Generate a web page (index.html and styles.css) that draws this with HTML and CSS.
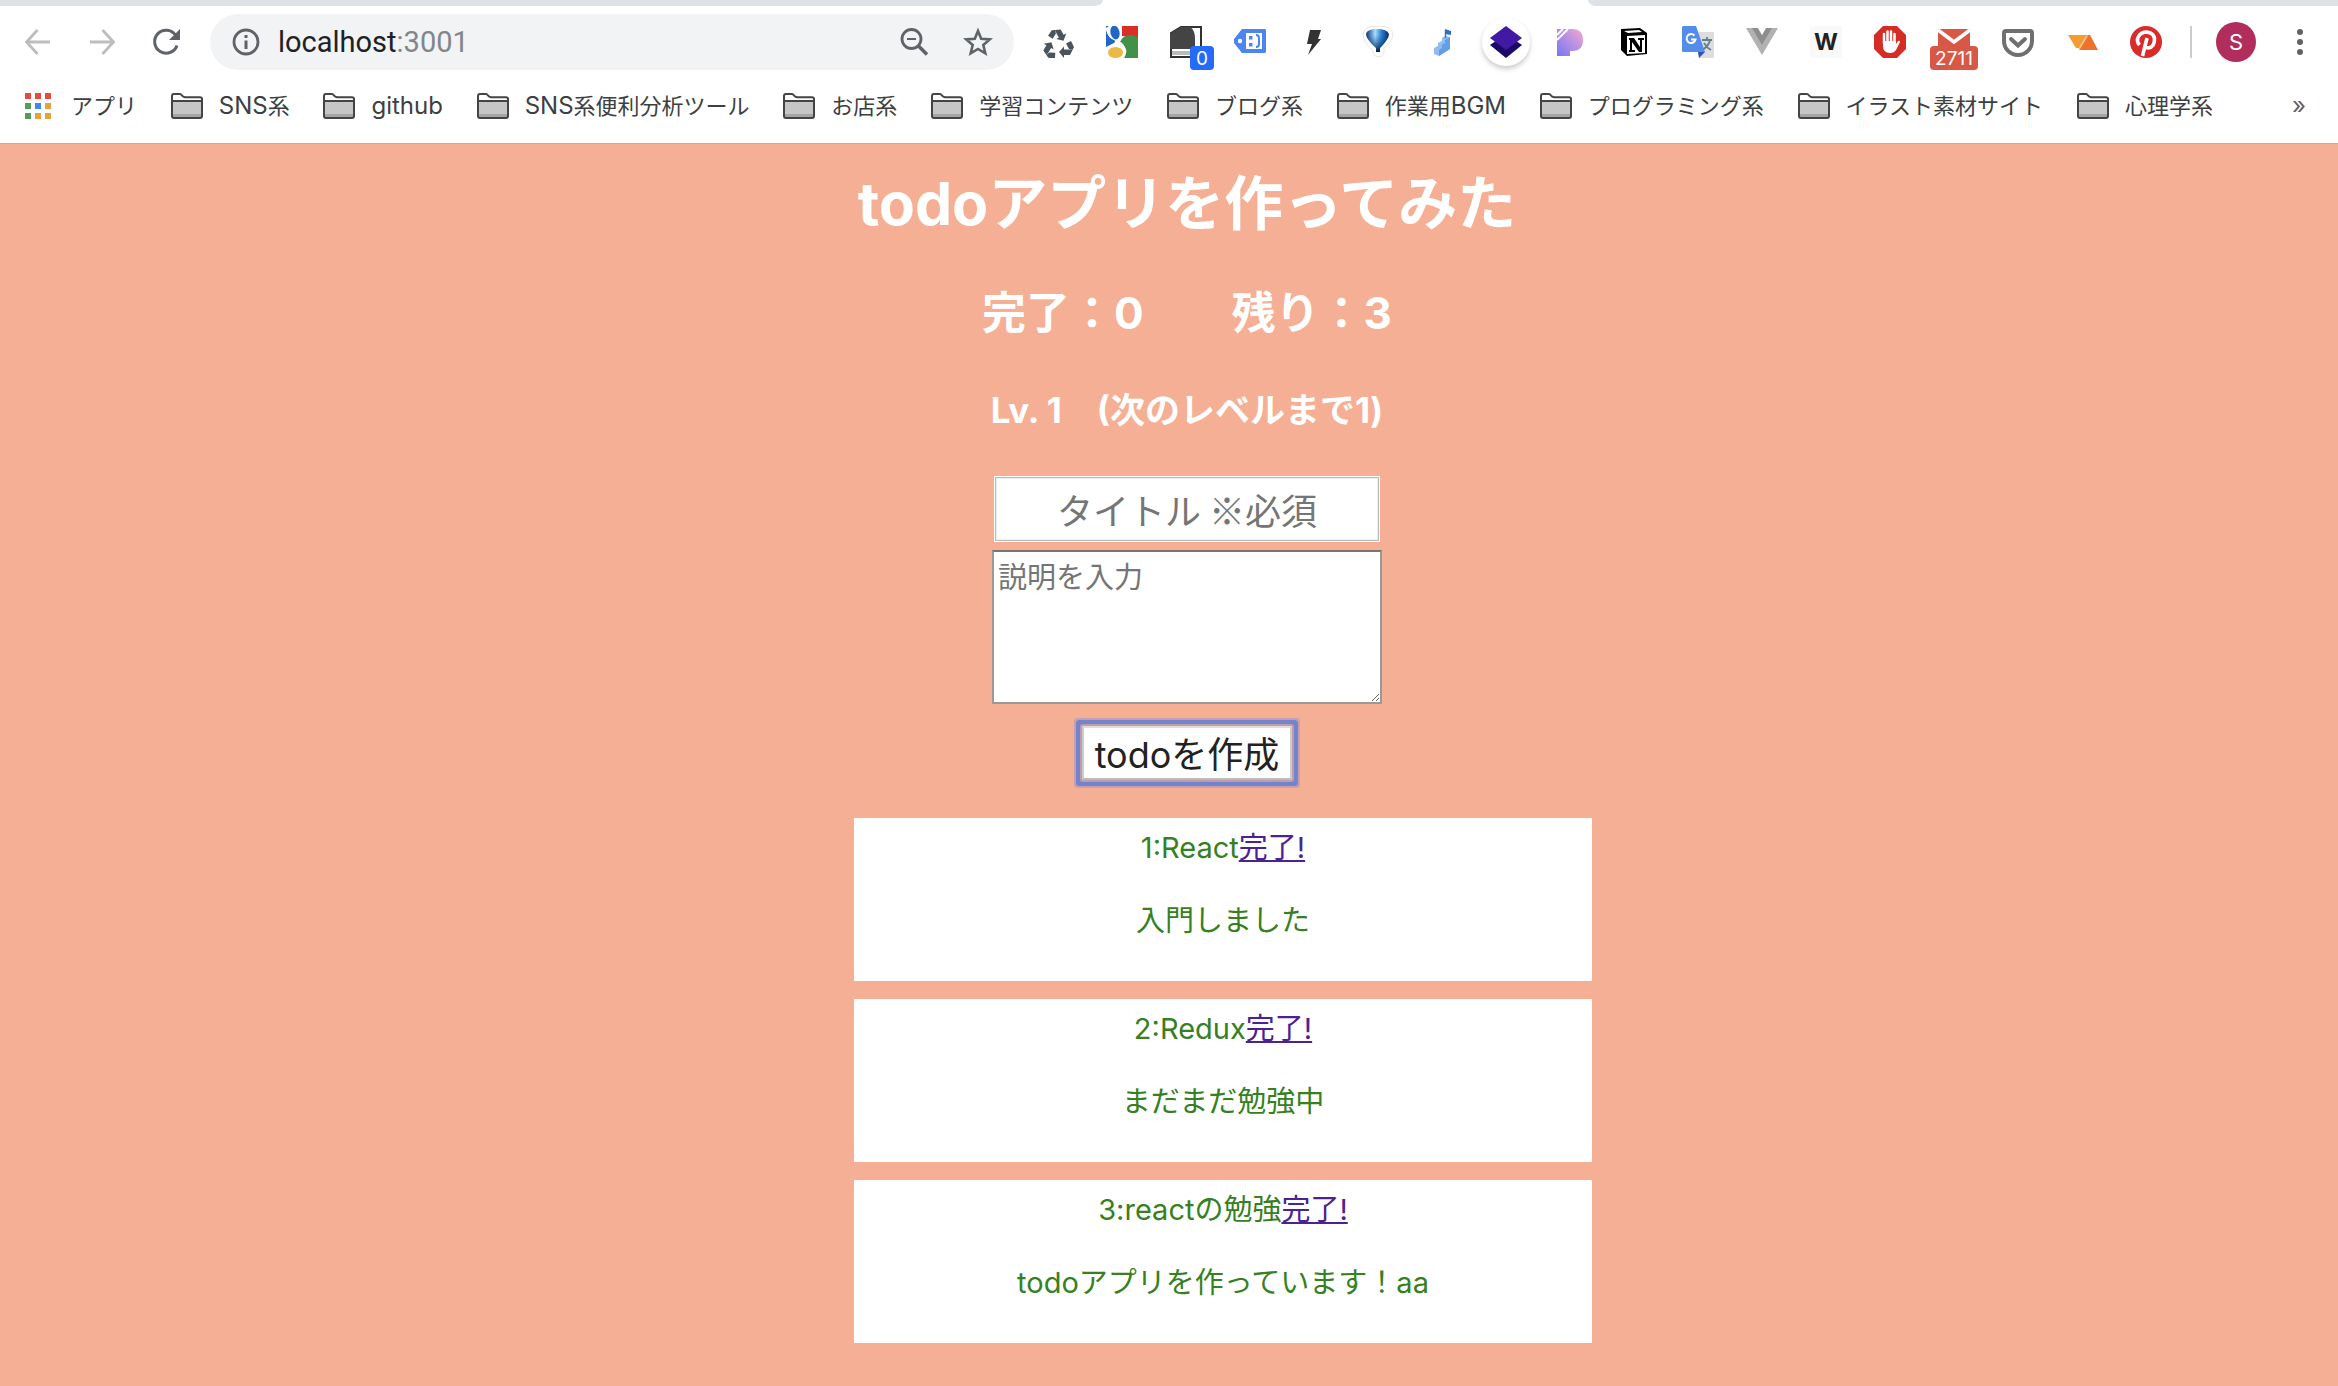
FILE: index.html
```html
<!DOCTYPE html>
<html lang="ja">
<head>
<meta charset="utf-8">
<title>todoアプリ</title>
<link rel="stylesheet" href="styles.css">
</head>
<body>
<svg class="defs" aria-hidden="true">
  <symbol id="folder" viewBox="0 0 32 26">
    <path d="M1.5 3Q1.5 1.5 3 1.5H10L13.500 4.500H30.500V8H1.500Z" fill="#fff"/>
    <path d="M2 8H30V24H2Z" fill="#c6c6c6"/><path d="M2 21H30V24H2Z" fill="#a5a5a5"/>
    <path d="M1 3Q1 1 3 1H9Q10 1 11 2.500T14 4.200H29Q31 4.200 31 6V23Q31 25 29 25H3Q1 25 1 23ZM1 8H31" fill="none" stroke="#444" stroke-width="2"/>
  </symbol>
</svg>
<header class="browser">
  <div class="tabs"><div class="tabs-left"></div><div class="tab-active"></div><div class="tabs-right"></div></div>
  <div class="toolbar">
    <nav class="history">
      <button class="icon" aria-label="戻る"><svg viewBox="0 0 32 32"><path d="M28 16H5M15.500 4L4.500 16L15.500 28" fill="none" stroke="#bcbdbf" stroke-width="2.800"/></svg></button>
      <button class="icon" aria-label="進む"><svg viewBox="0 0 32 32"><path d="M4 16H27M16.500 4L27.500 16L16.500 28" fill="none" stroke="#bcbdbf" stroke-width="2.800"/></svg></button>
      <button class="icon" aria-label="再読み込み"><svg viewBox="0 0 32 32"><path d="M25.500 9A11.500 11.500 0 1 0 27 19.500" fill="none" stroke="#5f6368" stroke-width="3"/><path d="M30 3V14H19Z" fill="#5f6368"/></svg></button>
    </nav>
    <div class="address">
      <svg class="info" viewBox="0 0 28 28"><circle cx="14" cy="14" r="12" fill="none" stroke="#5f6368" stroke-width="2.800"/><path d="M14 7V10M14 12.500V21" stroke="#5f6368" stroke-width="3"/></svg>
      <span class="url">localhost<span class="port">:3001</span></span>
      <button class="icon" aria-label="ズーム"><svg viewBox="0 0 32 32"><circle cx="13.500" cy="13" r="9.500" fill="none" stroke="#5f6368" stroke-width="2.800"/><path d="M20 19.500L29 28.500" stroke="#5f6368" stroke-width="3.500"/><path d="M9 13H18" stroke="#5f6368" stroke-width="2"/></svg></button>
      <button class="icon" aria-label="ブックマーク"><svg viewBox="0 0 32 32"><path d="M16 5L19.200 12.700L27.800 13.400L21.300 19L23.300 27.300L16 22.900L8.700 27.300L10.700 19L4.200 13.400L12.800 12.700Z" fill="none" stroke="#5f6368" stroke-width="2.600"/></svg></button>
    </div>
    <div class="extensions">
      <button class="icon" aria-label="Recycle"><svg viewBox="0 0 32 32"><defs><path id="arm" d="M17 26L22 20.500V23.500H26.500L30.500 24L28 29H22V32ZM24 17.500L29 15L32 21L30.500 24L27 23Z"/></defs><g fill="#4b545d"><use href="#arm"/><use href="#arm" transform="rotate(120 16 19)"/><use href="#arm" transform="rotate(240 16 19)"/></g></svg></button>
      <button class="icon" aria-label="Google"><svg viewBox="0 0 32 32"><path d="M0 0H32V32H0Z" fill="#fff"/><path d="M16 0H32V12L16 10Z" fill="#d93025"/><path d="M32 10V32H18Q22 26 19 21T14 16Q16 10 24 9Q29 9 32 12Z" fill="#429149"/><path d="M0 4Q2 12 8 14Q11 16 6 18L0 21Z" fill="#2364c7"/><ellipse cx="9" cy="6.500" rx="4.500" ry="7" fill="#2364c7" transform="rotate(-12 9 6.500)"/><ellipse cx="9.500" cy="26.500" rx="7.500" ry="5.500" fill="#eaba45"/><path d="M0 0H3L0 2Z" fill="#2364c7"/></svg></button>
      <button class="icon" aria-label="Kindle"><svg viewBox="0 0 32 32"><path d="M1 7L11 1H31V31H1Z" fill="#fff" stroke="#333" stroke-width="2"/><path d="M0 8L11 1H20Q25 4 25 12V23H0Z" fill="#444"/><path d="M2 25H24V29H2Z" fill="#bbb"/></svg><span class="badge badge-blue">0</span></button>
      <button class="icon" aria-label="Tag"><svg viewBox="0 0 32 32"><path d="M8 3H31Q32 3 32 5V25Q32 27 31 27H8L0 17V13Z" fill="#4a85f0"/><path d="M12 7H28V23H12Z" fill="#fff"/><circle cx="6" cy="15" r="2.200" fill="#fff"/><path d="M15 10H18.500V13.500H15ZM15 17H18.500V20.500H15Z" fill="#4a85f0"/><path d="M22 9Q25 9 25 12V18Q25 21 22 21" fill="none" stroke="#4a85f0" stroke-width="2"/></svg></button>
      <button class="icon" aria-label="Bolt"><svg viewBox="0 0 32 32"><path d="M12 4H23L20 13H23L10 29L14 18H9Z" fill="#333"/></svg></button>
      <button class="icon" aria-label="Balloon"><svg viewBox="0 0 32 32"><defs><linearGradient id="bl"><stop offset="0" stop-color="#0d2c78"/><stop offset=".4" stop-color="#a9e0fb"/><stop offset=".65" stop-color="#2f87d5"/><stop offset="1" stop-color="#0b256b"/></linearGradient><linearGradient id="bd" x2="0" y2="1"><stop offset=".25" stop-color="#0b52ad" stop-opacity="0"/><stop offset="1" stop-color="#0a1745"/></linearGradient></defs><path d="M15 0Q31 0 31 9Q30 16 22 22V28Q20 31 15 31Q11 30 11 25Q1 15 1 9Q1 0 15 0Z" fill="#fff" stroke="#e5e5e5"/><path d="M4 8Q5 3 15 3T27 8Q27 13 18 22V26H14V22Q4 13 4 8Z" fill="url(#bl)"/><path d="M4 8Q5 3 15 3T27 8Q27 13 18 22V26H14V22Q4 13 4 8Z" fill="url(#bd)"/></svg></button>
      <button class="icon" aria-label="Steps"><svg viewBox="0 0 32 32"><path d="M8 22L12 20V17L16 15V12L19 10L24 11V23L13 30L8 28Z" fill="#8fbdf2"/><path d="M13 24L16 22V19L19 17V14L24 11V23L13 30Z" fill="#639fe6"/><path d="M19.500 12V4" stroke="#3e77b9" stroke-width="1.500"/><path d="M19 3L25 5V9L19 8Z" fill="#2f6fc6"/></svg></button>
      <button class="icon icon-round" aria-label="Layers"><svg viewBox="0 0 32 32"><path d="M0 19L16 8L32 19L16 32Z" fill="#1b0767"/><path d="M0 12L16 0L32 12L16 24Z" fill="#4119a4"/></svg></button>
      <button class="icon" aria-label="Pandora"><svg viewBox="0 0 32 32"><defs><linearGradient id="pg" x1="1" y1="0" x2="0" y2="1"><stop offset="0" stop-color="#f5a8cf"/><stop offset="1" stop-color="#7575f8"/></linearGradient></defs><path d="M3 3H18Q29 3 29 14T18 25H16V30H3Z" fill="url(#pg)"/><path d="M3 9L9 3M3 14L14 3" stroke="#fff" stroke-width="1.800"/></svg></button>
      <button class="icon" aria-label="Notion"><svg viewBox="0 0 32 32"><path d="M3 3L22 2L29 7V28L9 30L3 24Z"/><path d="M6 5L21 4L24 6L10 7ZM9 10L27 9V27L9 28Z" fill="#fff"/><path d="M11 12H16L22 21V14H20V12H26V14H24V26H21L14 16V24H17V26H11V24H12V14H11Z"/></svg></button>
      <button class="icon" aria-label="翻訳"><svg viewBox="0 0 32 32"><path d="M12 6H32V32H17Z" fill="#ddd"/><path d="M20 14H30M25 11V14M28 14Q27 20 20 24M22 17Q25 22 29 24" stroke="#61808a" stroke-width="1.800" fill="none"/><path d="M16 26H23L17 32Z" fill="#3152b5"/><path d="M1 0H14L23 26H1Q0 26 0 25V1Z" fill="#548cec"/><path d="M12.500 9.500A4.500 4.500 0 1 0 13.500 13.500H9" fill="none" stroke="#fff" stroke-width="2"/></svg></button>
      <button class="icon" aria-label="Vue"><svg viewBox="0 0 32 32"><path d="M0 2H32L16 29Z" fill="#b2b2b2"/><path d="M6 2H12L16 9L20 2H26L16 19Z" fill="#8e8e8e"/><path d="M12 2H20L16 9Z" fill="#fff"/></svg></button>
      <button class="icon icon-w" aria-label="W">W</button>
      <button class="icon" aria-label="AdBlock"><svg viewBox="0 0 32 32"><path d="M9 0H23L32 9V23L23 32H9L0 23V9Z" fill="#d52d23"/><path d="M10 17V8M13.500 16V5.500M17 16V5.500M20.500 17V8" stroke="#fff" stroke-width="2.500" stroke-linecap="round"/><path d="M9 15H22V18L24 15Q26 14 26 16L22 24Q20 27 16 27Q9 27 9 20Z" fill="#fff"/></svg></button>
      <button class="icon" aria-label="Gmail"><svg viewBox="0 0 32 32"><path d="M0 3H32V25H0Z" fill="#d85847"/><path d="M0 4L16 16L32 4" fill="none" stroke="#fff" stroke-width="3.500"/></svg><span class="badge badge-red">2711</span></button>
      <button class="icon" aria-label="Pocket"><svg viewBox="0 0 32 32"><path d="M4 5H28Q30 5 30 7V15A14 14 0 0 1 2 15V7Q2 5 4 5Z" fill="none" stroke="#6f6f6f" stroke-width="4"/><path d="M9 13L16 19.500L23 13" fill="none" stroke="#6f6f6f" stroke-width="4" stroke-linecap="round"/></svg></button>
      <button class="icon" aria-label="Orange"><svg viewBox="0 0 32 32"><path d="M2 9H22L14 22H10Z" fill="#f59b34"/><path d="M22 9H24L32 24H13Z" fill="#ee712c"/><path d="M21 10L13 23" stroke="#fbc491" stroke-width="1.500"/></svg></button>
      <button class="icon" aria-label="Pinterest"><svg viewBox="0 0 32 32"><circle cx="16" cy="16" r="16" fill="#da2b2b"/><path d="M9.500 19Q6 15 8.500 10.500Q11 6 17 6Q24 7 24.500 13Q24.500 21 18.500 22Q16 22 15 20M17 12L12.500 30" fill="none" stroke="#fff" stroke-width="3.600"/></svg></button>
    </div>
    <span class="divider"></span>
    <button class="avatar" aria-label="プロフィール">S</button>
    <button class="icon" aria-label="メニュー"><svg viewBox="0 0 32 32" fill="#5f6368"><circle cx="16" cy="6" r="3"/><circle cx="16" cy="16" r="3"/><circle cx="16" cy="26" r="3"/></svg></button>
  </div>
  <nav class="bookmarks">
    <div class="bookmark-list">
      <a href="#"><svg class="apps" viewBox="0 0 26 26"><path d="M0 0H6V6H0ZM10 0H16V6H10ZM20 0H26V6H20Z" fill="#e84a3e"/><path d="M0 10H6V16H0ZM0 20H6V26H0Z" fill="#559b5b"/><path d="M10 10H16V16H10Z" fill="#4189f0"/><path d="M20 10H26V16H20ZM10 20H16V26H10ZM20 20H26V26H20Z" fill="#e6a338"/></svg>アプリ</a>
      <a href="#"><svg class="folder"><use href="#folder"/></svg><span><span class="latin">SNS</span>系</span></a>
      <a href="#"><svg class="folder"><use href="#folder"/></svg><span class="latin">github</span></a>
      <a href="#"><svg class="folder"><use href="#folder"/></svg><span><span class="latin">SNS</span>系便利分析ツール</span></a>
      <a href="#"><svg class="folder"><use href="#folder"/></svg>お店系</a>
      <a href="#"><svg class="folder"><use href="#folder"/></svg>学習コンテンツ</a>
      <a href="#"><svg class="folder"><use href="#folder"/></svg>ブログ系</a>
      <a href="#"><svg class="folder"><use href="#folder"/></svg><span>作業用<span class="latin">BGM</span></span></a>
      <a href="#"><svg class="folder"><use href="#folder"/></svg>プログラミング系</a>
      <a href="#"><svg class="folder"><use href="#folder"/></svg>イラスト素材サイト</a>
      <a href="#"><svg class="folder"><use href="#folder"/></svg>心理学系</a>
    </div>
    <button class="more" aria-label="他のブックマーク">»</button>
  </nav>
</header>
<main class="app">
  <h1>todoアプリを作ってみた</h1>
  <h2>完了：0　　残り：3</h2>
  <h3>Lv. 1　(次のレベルまで1)</h3>
  <form class="todo-form">
    <input class="title-input" type="text" placeholder="タイトル ※必須" aria-label="タイトル">
    <textarea class="body-input" placeholder="説明を入力" aria-label="説明"></textarea>
    <button class="create" type="button">todoを作成</button>
  </form>
  <ul class="todos">
    <li><p>1:React<a href="#">完了!</a></p><p>入門しました</p></li>
    <li><p>2:Redux<a href="#">完了!</a></p><p>まだまだ勉強中</p></li>
    <li><p>3:reactの勉強<a href="#">完了!</a></p><p>todoアプリを作っています！aa</p></li>
  </ul>
</main>
</body>
</html>
```
FILE: styles.css
```css
* { box-sizing: border-box; }
body {
  margin: 0;
  min-height: 100vh;
  background: #f4af94;
  font-family: Inter, "Noto Sans CJK JP", sans-serif;
}
button, input, textarea { font-family: inherit; }
h1, h2, h3, p, ul { margin: 0; padding: 0; }
.defs { position: absolute; width: 0; height: 0; }

/* browser chrome */
.browser { background: #fff; border-bottom: 1px solid #b2b6ba; }
.tabs { display: flex; height: 6px; }
.tabs-left { flex: 1103; background: #dee1e6; border-bottom-right-radius: 14px 10px; }
.tab-active { flex: 485; }
.tabs-right { flex: 750; background: #dee1e6; border-bottom-left-radius: 14px 10px; }
.toolbar { display: flex; align-items: center; height: 72px; padding: 0 22px; }
.history { display: flex; gap: 32px; margin-right: 28px; }
.icon {
  position: relative;
  flex: none;
  width: 32px;
  height: 32px;
  padding: 0;
  border: 0;
  background: none;
}
.icon svg { display: block; width: 32px; height: 32px; }
.address {
  flex: 1;
  display: flex;
  align-items: center;
  gap: 32px;
  height: 56px;
  padding: 0 20px 0 22px;
  border-radius: 28px;
  background: #f1f3f4;
}
.info { width: 28px; height: 28px; }
.url { flex: 1; margin-left: -14px; font: 29px/56px Roboto, sans-serif; color: #202124; }
.port { color: #80868b; }
.extensions { display: flex; gap: 32px; margin-left: 28px; }
.badge {
  position: absolute;
  top: 20px;
  height: 24px;
  border-radius: 4px;
  color: #fff;
  font-size: 19px;
  line-height: 26px;
  text-align: center;
}
.badge-blue { left: 20px; width: 24px; background: #236bf8; }
.badge-red { left: -8px; width: 48px; background: #d85847; }
.icon-round { border-radius: 50%; box-shadow: 0 0 0 8px #fff, 0 3px 5px 8px #ccc; }
.icon-w { background: #f9f9f9; font-size: 23px; font-weight: 700; line-height: 32px; color: #222; }
.divider { width: 2px; height: 32px; margin: 0 24px 0 28px; background: #ccc; }
.avatar {
  width: 40px;
  height: 40px;
  margin-right: 28px;
  padding: 0;
  border: 0;
  border-radius: 50%;
  background: #b12d5b;
  color: #fff;
  font-size: 22px;
}
.bookmarks { display: flex; align-items: center; height: 65px; padding: 0 32px 9px 25px; }
.bookmark-list { flex: 1; display: flex; justify-content: space-between; margin-right: 79px; }
.bookmark-list a {
  display: flex;
  align-items: center;
  gap: 16px;
  color: #3c4043;
  font-size: 22px;
  line-height: 32px;
  text-decoration: none;
  white-space: nowrap;
}
.latin { font-size: 24px; }
.apps { width: 26px; height: 26px; margin-right: 4px; }
.folder { width: 32px; height: 26px; }
.more { padding: 0; border: 0; background: none; color: #5f6368; font-size: 24px; line-height: 32px; }

/* todo app */
.app {
  width: 846px;
  max-width: 100%;
  margin: 0 auto;
  padding: 18px 0 42px 36px;
  text-align: center;
}
h1, h2, h3 { color: #fff; white-space: nowrap; }
h1 { margin-bottom: 35px; font-size: 59px; line-height: 84px; }
h2 { margin-bottom: 40px; font-size: 44px; line-height: 64px; }
h3 { margin-bottom: 41px; font-size: 35px; line-height: 50px; }
.todo-form { display: flex; flex-direction: column; align-items: center; }
.title-input {
  width: 386px;
  height: 66px;
  margin-bottom: 8px;
  border: 1px solid #fff;
  box-shadow: inset 0 0 0 1px #bbb, inset 0 0 0 2px #eee;
  font-family: "Noto Sans CJK JP", sans-serif;
  font-size: 36px;
  text-align: center;
}
.body-input {
  width: 390px;
  height: 154px;
  margin-bottom: 22px;
  padding: 4px;
  border: 2px solid #999;
  border-top-color: #767676;
  font-size: 29px;
  line-height: 44px;
}
.title-input::placeholder, .body-input::placeholder { color: #757575; }
.create {
  width: 210px;
  height: 54px;
  margin-bottom: 38px;
  padding: 4px 0 0;
  border: 2px solid #ccc;
  border-top-color: #ddd;
  border-bottom-color: #bbb;
  background: #fff;
  box-shadow: 0 0 0 2px #c19ba9, 0 0 0 6px #7184cc, 0 0 0 8px #c79fb0;
  border-radius: 1px;
  color: #222;
  font-size: 36px;
  line-height: 46px;
  white-space: nowrap;
}
.todos { display: grid; gap: 18px; padding-left: 72px; list-style: none; }
.todos li {
  display: grid;
  gap: 29px;
  padding: 8px 0 38px;
  background: #fff;
  color: #37801f;
  font-size: 29px;
  line-height: 44px;
}
.todos a { color: #4c2191; }
```
